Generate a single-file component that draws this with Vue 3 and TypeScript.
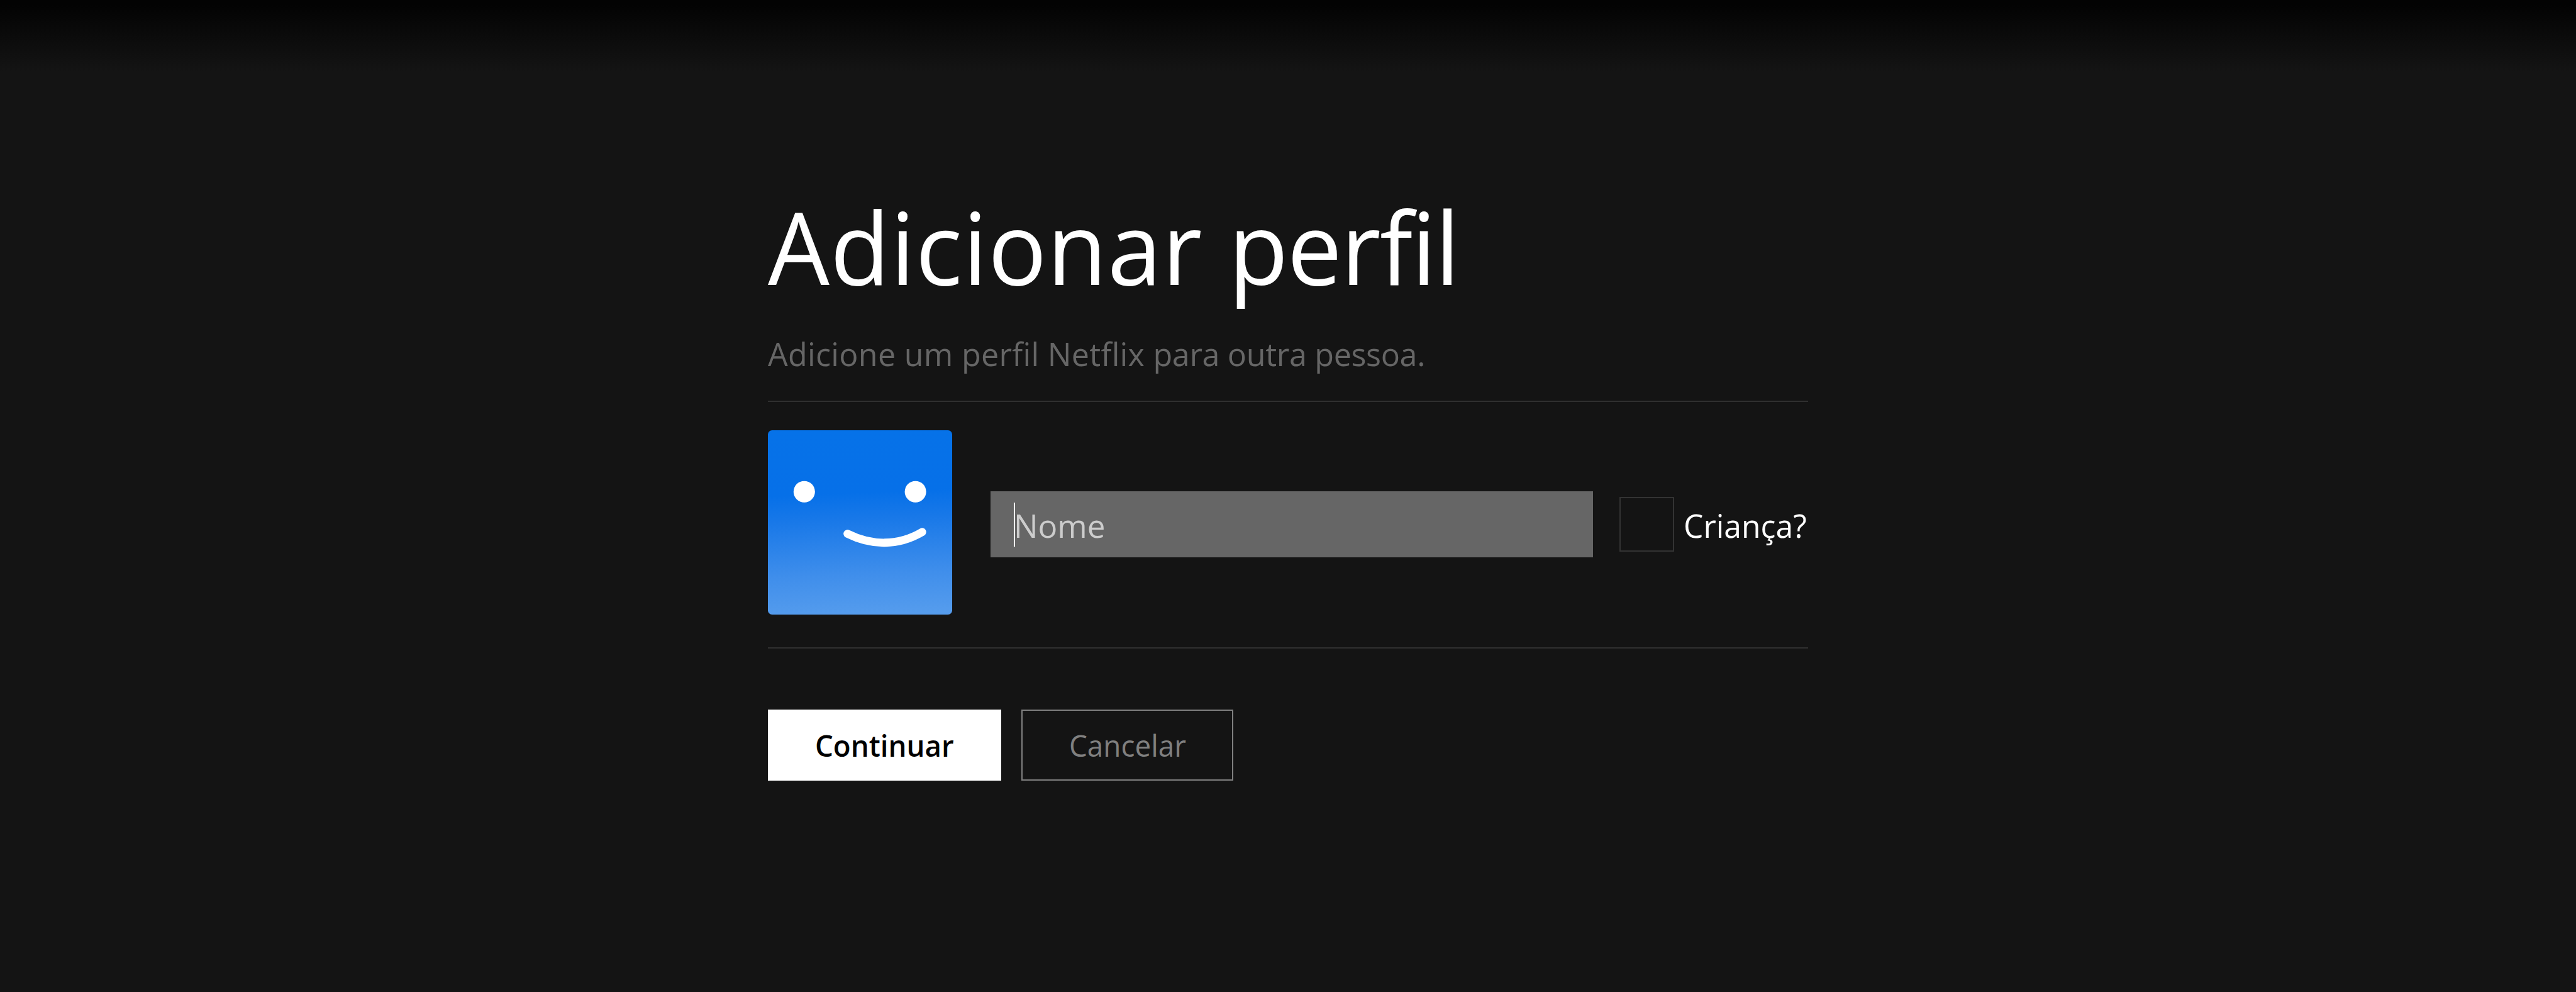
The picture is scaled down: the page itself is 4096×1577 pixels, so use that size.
<script setup lang="ts">
interface Action { label: string; kind: 'primary' | 'secondary' }
interface Run { text: string; tracking: number }

const title: Run[] = [
  { text: 'Adicionar ', tracking: 0.85 },
  { text: 'perfil', tracking: -1.7 },
]
const subtitle: Run[] = [
  { text: 'Adicione um perfil Netflix ', tracking: 0.26 },
  { text: 'para outra pessoa.', tracking: -0.38 },
]
const placeholder = 'Nome'
const kidLabel = 'Criança?'
const actions: Action[] = [
  { label: 'Continuar', kind: 'primary' },
  { label: 'Cancelar', kind: 'secondary' },
]
</script>

<template>
  <div class="page">
    <main class="panel">
      <h1 class="title">
        <span><b v-for="r in title" :key="r.text" :style="{ letterSpacing: r.tracking + 'px' }">{{ r.text }}</b></span>
      </h1>
      <h2 class="subtitle">
        <span><b v-for="r in subtitle" :key="r.text" :style="{ letterSpacing: r.tracking + 'px' }">{{ r.text }}</b></span>
      </h2>

      <section class="profile">
        <svg class="avatar" viewBox="0 0 375 375" aria-hidden="true">
          <defs>
            <linearGradient id="sky" x1="0.46" y1="0" x2="0.5" y2="1">
              <stop offset="0" stop-color="#0672e8" />
              <stop offset="0.34" stop-color="#0670e8" />
              <stop offset="0.48" stop-color="#1878e8" />
              <stop offset="0.78" stop-color="#3f8eeb" />
              <stop offset="1" stop-color="#559ced" />
            </linearGradient>
          </defs>
          <rect width="375" height="375" rx="8.5" fill="url(#sky)" />
          <circle cx="74" cy="125" r="21.8" fill="#fff" />
          <circle cx="300.3" cy="125" r="21.8" fill="#fff" />
          <path d="M162 210.5 C210 234.5 264 236.5 314 207" fill="none" stroke="#fff" stroke-width="16.4" stroke-linecap="round" />
        </svg>

        <div class="name" role="textbox">
          <i class="caret"></i>
          <span>{{ placeholder }}</span>
        </div>

        <div class="kid">
          <div class="box" role="checkbox" aria-checked="false"></div>
          <span>{{ kidLabel }}</span>
        </div>
      </section>

      <div class="actions">
        <button v-for="a in actions" :key="a.label" :class="['btn', a.kind]"><span>{{ a.label }}</span></button>
      </div>
    </main>
  </div>
</template>

<style>
body { background: #141414; overflow: hidden; }
</style>

<style scoped>
.page {
  box-sizing: border-box;
  height: 1577px;
  background: linear-gradient(180deg, #030303 0, #030303 8px, #141414 113px) no-repeat #141414;
  padding-top: 297px;
  font-family: "Open Sans", "Noto Sans", sans-serif;
  font-variant-ligatures: none;
  color: #fff;
}
.panel { width: 1654px; margin: 0 auto; }
span { display: inline-block; transform-origin: 0 50%; white-space: pre; }
b { font-weight: inherit; }

.title { margin: 0; font-size: 158.5px; line-height: 190px; font-weight: 400; }
.title span { transform: scaleX(0.979); }

.subtitle { margin: 39px 0 0; font-size: 51.7px; line-height: 72px; font-weight: 400; color: #666; }
.subtitle span { transform: scaleX(0.973); }

.profile {
  display: flex;
  box-sizing: border-box;
  height: 394px;
  margin-top: 39px;
  padding-top: 45px;
  border-top: 2px solid #303030;
  border-bottom: 2px solid #303030;
}
.profile > * { flex-shrink: 0; }
.avatar { display: block; width: 293px; height: 293px; }

.name {
  position: relative;
  box-sizing: border-box;
  width: 958px;
  height: 105px;
  margin: 97px 0 0 61px;
  padding: 18px 0 0 37px;
  background: #666;
  color: #ccc;
  font-size: 51.7px;
  line-height: 72px;
}
.name span { transform: scaleX(0.99); }
.caret { position: absolute; left: 37px; top: 18px; width: 2px; height: 70px; background: #fff; }

.kid {
  display: flex;
  margin: 106px 0 0 42px;
  font-size: 51.7px;
  line-height: 72px;
}
.kid span { margin: 9px 0 0 15px; transform: scaleX(0.964); }
.box { box-sizing: border-box; width: 87px; height: 87px; border: 2px solid #333; }

.actions { display: flex; gap: 32px; margin-top: 97px; }
.btn {
  box-sizing: border-box;
  height: 113px;
  margin: 0;
  padding: 0;
  border: 2px solid #808080;
  border-radius: 0;
  background: transparent;
  color: #808080;
  font: 400 47.3px/72px "Open Sans", "Noto Sans", sans-serif;
}
.btn span { transform-origin: 50% 50%; }
.primary { width: 371px; border-color: #fff; background: #fff; color: #000; font-weight: 600; }
.primary span { transform: scaleX(0.966); }
.secondary { width: 337px; }
.secondary span { transform: scaleX(0.97); }
</style>
